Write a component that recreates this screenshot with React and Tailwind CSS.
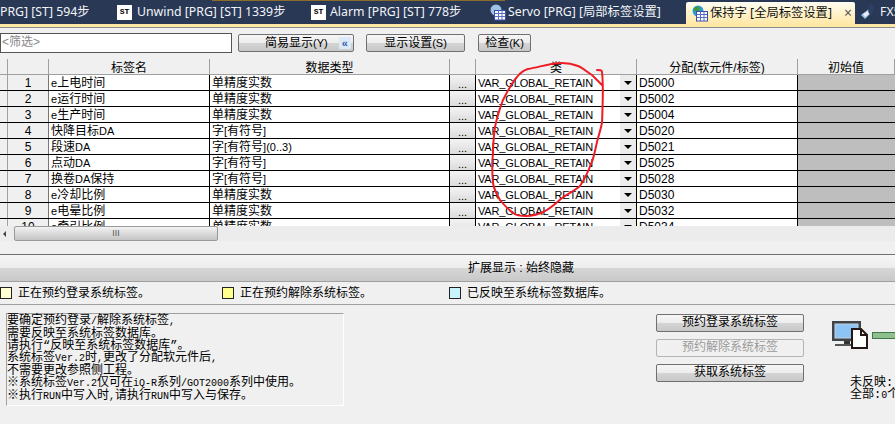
import React from 'react';

const rows = [
  ['1', 'e上电时间', '单精度实数', 'D5000'],
  ['2', 'e运行时间', '单精度实数', 'D5002'],
  ['3', 'e生产时间', '单精度实数', 'D5004'],
  ['4', '快降目标DA', '字[有符号]', 'D5020'],
  ['5', '段速DA', '字[有符号](0..3)', 'D5021'],
  ['6', '点动DA', '字[有符号]', 'D5025'],
  ['7', '换卷DA保持', '字[有符号]', 'D5028'],
  ['8', 'e冷却比例', '单精度实数', 'D5030'],
  ['9', 'e电晕比例', '单精度实数', 'D5032'],
  ['10', 'e牵引比例', '单精度实数', 'D5034'],
];

const notes = [
  '要确定预约登录/解除系统标签,',
  '需要反映至系统标签数据库。',
  '请执行“反映至系统标签数据库”。',
  '系统标签Ver.2时,更改了分配软元件后,',
  '不需要更改参照侧工程。',
  '※系统标签Ver.2仅可在iQ-R系列/GOT2000系列中使用。',
  '※执行RUN中写入时,请执行RUN中写入与保存。',
];

const btn = 'flex items-center justify-center rounded-[2px] border border-[#707070] bg-[linear-gradient(#f6f6f6_0%,#ececec_50%,#d4d4d4_52%,#c8c8c8_100%)] text-[12px] leading-none text-black';

// ascii runs in the reference are narrower than the CJK text around them
function Mixed({ text, latin = 'text-[11px]' }) {
  return text.split(/([\x20-\x7e]+)/).map((part, i) =>
    i % 2 ? <span key={i} className={latin}>{part}</span> : part
  );
}

function StIcon() {
  return (
    <span className="flex h-[15px] w-[15px] shrink-0 items-center justify-center bg-white font-['Liberation_Mono',monospace] text-[8px] font-bold leading-none text-black">
      ST
    </span>
  );
}

function LabelIcon({ globe }) {
  return (
    <svg width="17" height="17" viewBox="0 0 17 17" className="shrink-0">
      <circle cx="7" cy="6" r="5.5" fill={globe ? '#2f9bd6' : '#9cc3e6'} />
      {globe && <path d="M3 3 L7 1 L9 4 L6 7 L3 6 Z" fill="#3f9a3a" />}
      <rect x="5.5" y="6.5" width="11" height="9.5" fill="#fff" stroke="#3a4fa8" />
      <path d="M5.5 9.5 H16.5 M5.5 12.5 H16.5 M9.5 6.5 V16 M13 6.5 V16" stroke="#5a6fc8" strokeWidth="1" />
    </svg>
  );
}

function FxIcon() {
  return (
    <svg width="16" height="18" viewBox="0 0 16 18" className="shrink-0">
      <path d="M1 12 L9 6 L12 9 L5 16 Z" fill="#9fc4ea" />
      <path d="M9 1 L14 3 L12 12 L8 10 Z" fill="#2d3f66" />
      <path d="M3 11 L8 8 L9 11 L5 14 Z" fill="#e8eef7" />
    </svg>
  );
}

function Tab({ width, icon, children }) {
  return (
    <div className={`flex h-[24px] shrink-0 items-center overflow-hidden whitespace-nowrap pl-[5px] ${width}`}>
      {icon}
      <span className="text-[12.3px] leading-none text-[#f2f4f8]">{children}</span>
    </div>
  );
}

function Cell({ className, children }) {
  return (
    <div className={`h-full shrink-0 overflow-hidden whitespace-nowrap border-r border-black text-[12px] leading-[17px] text-black ${className}`}>
      {children}
    </div>
  );
}

function HeadCell({ className, children }) {
  return (
    <div className={`h-full shrink-0 overflow-hidden border-r border-[#a0a0a0] bg-[#f0f0f0] text-center text-[12px] leading-[19px] text-black ${className}`}>
      {children}
    </div>
  );
}

function Swatch({ color, width, children }) {
  return (
    <div className={`flex shrink-0 items-center gap-[6px] ${width}`}>
      <span className={`h-[12px] w-[12px] shrink-0 border border-[#222] ${color}`} />
      <span className="text-[12px] leading-none text-black">{children}</span>
    </div>
  );
}

export default function App() {
  return (
    <div className="relative flex h-[424px] w-[895px] flex-col overflow-hidden bg-[#f0f0f0] font-['Liberation_Sans','Noto_Sans_CJK_SC',sans-serif]">
      {/* Document tabs */}
      <div className="flex h-[24px] shrink-0 bg-[#293955] font-['Noto_Sans','Noto_Sans_CJK_SC',sans-serif]">
        <div className="flex h-[24px] w-[112px] shrink-0 items-center overflow-hidden whitespace-nowrap">
          <span className="text-[12.3px] leading-none text-[#f2f4f8]">PRG] [ST] 594步</span>
        </div>
        <Tab width="w-[194px]" icon={<span className="mr-[5px] flex"><StIcon /></span>}>Unwind [PRG] [ST] 1339步</Tab>
        <Tab width="w-[178px]" icon={<span className="mr-[4px] flex"><StIcon /></span>}>Alarm [PRG] [ST] 778步</Tab>
        <Tab width="w-[202px]" icon={<span className="mr-[2px] flex"><LabelIcon /></span>}>Servo [PRG] [局部标签设置]</Tab>
        <div className="mt-[2px] flex h-[22px] w-[169px] shrink-0 items-center rounded-t-[2px] bg-[linear-gradient(#fffdf2,#ffe8a6)] pl-[5px]">
          <LabelIcon globe />
          <span className="ml-[2px] whitespace-nowrap text-[12.3px] leading-none text-[#111]">保持字 [全局标签设置]</span>
          <span className="ml-[12px] text-[14px] leading-none text-[#555]">×</span>
        </div>
        <Tab width="w-[40px]" icon={<span className="mr-[4px] flex"><FxIcon /></span>}>FX5</Tab>
      </div>
      <div className="absolute left-[212px] top-0 h-[1px] w-[293px] bg-[#8a6d2a]" />
      <div className="h-[3px] shrink-0 bg-[#ffe8a6]" />
      <div className="h-[1px] shrink-0 bg-[#8a8a8a]" />

      {/* Filter and display buttons */}
      <div className="flex h-[31px] shrink-0 items-start pt-[5px]">
        <div className="h-[20px] w-[232px] shrink-0 border border-[#555] bg-white pl-[1px] text-[12px] leading-[17px] text-[#888]">&lt;筛选&gt;</div>
        <button className={`ml-[6px] mt-[1px] h-[18px] w-[116px] shrink-0 !justify-start pl-[26px] ${btn}`}>
          <span><Mixed text="简易显示(Y)" /></span>
          <span className="ml-[11px] flex h-[12px] w-[12px] items-center justify-center rounded-[1px] bg-[#dbe9f8] text-[11px] font-bold leading-none text-[#2f5f9f]">«</span>
        </button>
        <button className={`ml-[12px] mt-[1px] h-[18px] w-[99px] shrink-0 ${btn}`}><span><Mixed text="显示设置(S)" /></span></button>
        <button className={`ml-[13px] mt-[1px] h-[18px] w-[53px] shrink-0 ${btn}`}><span><Mixed text="检查(K)" /></span></button>
      </div>

      {/* Label table */}
      <div className="h-[167px] shrink-0 overflow-hidden bg-white">
        <div className="flex h-[16px] border-b border-[#a0a0a0]">
          <HeadCell className="w-[8px]" />
          <HeadCell className="w-[41px]" />
          <HeadCell className="w-[161px]">标签名</HeadCell>
          <HeadCell className="w-[240px]">数据类型</HeadCell>
          <HeadCell className="w-[26px]" />
          <HeadCell className="w-[161px]">类</HeadCell>
          <HeadCell className="w-[161px]">分配(软元件/标签)</HeadCell>
          <HeadCell className="w-[97px]">初始值</HeadCell>
        </div>
        {rows.map((r) => (
          <div key={r[0]} className="flex h-[16px] border-b border-black">
            <div className="h-full w-[8px] shrink-0 border-r border-[#a0a0a0] bg-[#f0f0f0]" />
            <div className="h-full w-[41px] shrink-0 overflow-hidden border-r border-[#777] bg-[#f0f0f0] text-center text-[12px] leading-[17px] text-black">{r[0]}</div>
            <Cell className="w-[161px] pl-[2px]"><Mixed text={r[1]} /></Cell>
            <Cell className="w-[240px] pl-[2px]"><Mixed text={r[2]} /></Cell>
            <div className="flex h-full w-[26px] shrink-0 items-end justify-center border-r border-black bg-[linear-gradient(#f4f4f4,#dcdcdc)] text-[11px] leading-[12px] text-black">...</div>
            <Cell className="flex w-[161px] justify-between pl-[2px]">
              <span className="text-[11px] tracking-[-0.15px]">VAR_GLOBAL_RETAIN</span>
              <span className="flex h-full w-[16px] items-center justify-center bg-[#ececec]">
                <span className="h-0 w-0 border-x-[4px] border-t-[4px] border-x-transparent border-t-black" />
              </span>
            </Cell>
            <Cell className="w-[161px] pl-[2px] text-[11px]">{r[3]}</Cell>
            <div className="h-full w-[97px] shrink-0 bg-[#bebebe]" />
          </div>
        ))}
      </div>

      {/* Horizontal scrollbar */}
      <div className="flex h-[15px] shrink-0 items-center bg-[#ececec]">
        <span className="ml-[3px] h-0 w-0 border-y-[3px] border-r-[3px] border-y-transparent border-r-[#444]" />
        <div className="ml-[8px] flex h-[15px] w-[204px] items-center justify-center rounded-[2px] border border-[#9a9a9a] bg-[linear-gradient(#f2f2f2,#c4c4c4)] text-[9px] leading-none text-[#555]">III</div>
      </div>

      <div className="h-[13px] shrink-0" />
      <div className="h-[1px] shrink-0 bg-[#707070]" />

      {/* Extended display bar */}
      <div className="flex h-[26px] shrink-0 items-center justify-center bg-[linear-gradient(#f6f6f6_0%,#ededed_48%,#d6d6d6_52%,#c9c9c9_100%)] pl-[147px] text-[12px] leading-none text-black">
        扩展显示 : 始终隐藏
      </div>
      <div className="h-[1px] shrink-0 bg-[#a0a0a0]" />

      {/* Legend */}
      <div className="flex h-[22px] shrink-0 items-center">
        <Swatch color="bg-[#ffffd2]" width="w-[222px]">正在预约登录系统标签。</Swatch>
        <Swatch color="bg-[#ffff8c]" width="w-[227px]">正在预约解除系统标签。</Swatch>
        <Swatch color="bg-[#c9f3ff]" width="w-[300px]">已反映至系统标签数据库。</Swatch>
      </div>
      <div className="h-[1px] shrink-0 bg-[#a0a0a0]" />

      {/* Notes, system label buttons and status */}
      <div className="flex flex-1 items-start pl-[6px] pt-[8px] font-['Liberation_Mono','Noto_Sans_CJK_SC',monospace]">
        <div className="h-[93px] w-[338px] shrink-0 border border-t-[#a0a0a0] border-l-[#a0a0a0] border-r-white border-b-white pt-[1px]">
          {notes.map((n) => (
            <div key={n} className="whitespace-nowrap text-[12px] leading-[12px] text-black"><Mixed text={n} latin="text-[10px]" /></div>
          ))}
        </div>
        <div className="ml-[312px] flex w-[148px] shrink-0 flex-col gap-[7px] pt-[1px]">
          <button className={`h-[18px] w-full ${btn}`}>预约登录系统标签</button>
          <button className="flex h-[18px] w-full items-center justify-center rounded-[2px] border border-[#b4b4b4] bg-[#f0f0f0] text-[12px] leading-none text-[#9a9a9a]">预约解除系统标签</button>
          <button className={`h-[18px] w-full ${btn}`}>获取系统标签</button>
        </div>
        <div className="ml-[28px] flex w-[63px] shrink-0 flex-col overflow-hidden pt-[8px]">
          <div className="flex items-center">
            <svg width="40" height="29" viewBox="0 0 40 29" className="shrink-0">
              <rect x="0" y="0" width="29" height="20" fill="#3f444b" />
              <rect x="3" y="3" width="23" height="14" fill="#8cc4f5" stroke="#c8d2dc" />
              <rect x="12" y="20" width="6" height="3" fill="#333" />
              <rect x="3" y="23" width="24" height="2" fill="#555" />
              <path d="M20 8 H29 L35 14 V27 H20 Z" fill="#fff" stroke="#231815" strokeWidth="2" />
              <path d="M29 8 V14 H35" fill="none" stroke="#231815" strokeWidth="2" />
            </svg>
            <div className="h-[7px] w-[30px] shrink-0 border border-[#3f7a45] bg-[#8fbf8f]" />
          </div>
          <div className="ml-[18px] mt-[27px] whitespace-nowrap text-[12px] leading-[12px] text-black">
            <div>未反映:</div>
            <div>全部:<span className="text-[10px]">0</span>个</div>
          </div>
        </div>
      </div>

      {/* Hand-drawn red annotation */}
      <svg width="895" height="424" viewBox="0 0 895 424" className="pointer-events-none absolute left-0 top-0">
        <path
          d="M597 70 C600 70 602 70 602 72 C603 80 603 100 602 123 C600 132 598 138 597 142 C595 150 594 158 591 164 C588 172 584 180 580 186 C574 191 568 194 562 198 C556 203 550 209 543 212 C537 215 532 216 526 216 C520 216 516 215 513 213 C508 209 504 205 500 200 C497 195 494 190 493 183 C492 172 492 162 493 153 C493 144 494 135 495 127 C497 117 500 108 503 100 C507 92 511 84 517 77 C520 73 524 70 528 69 C540 67 550 63 562 63 C568 63 573 64 578 66 C583 68 587 72 592 75 C595 78 599 82 602 85"
          fill="none"
          stroke="#ee1c25"
          strokeWidth="2"
          strokeLinecap="round"
        />
      </svg>
    </div>
  );
}
